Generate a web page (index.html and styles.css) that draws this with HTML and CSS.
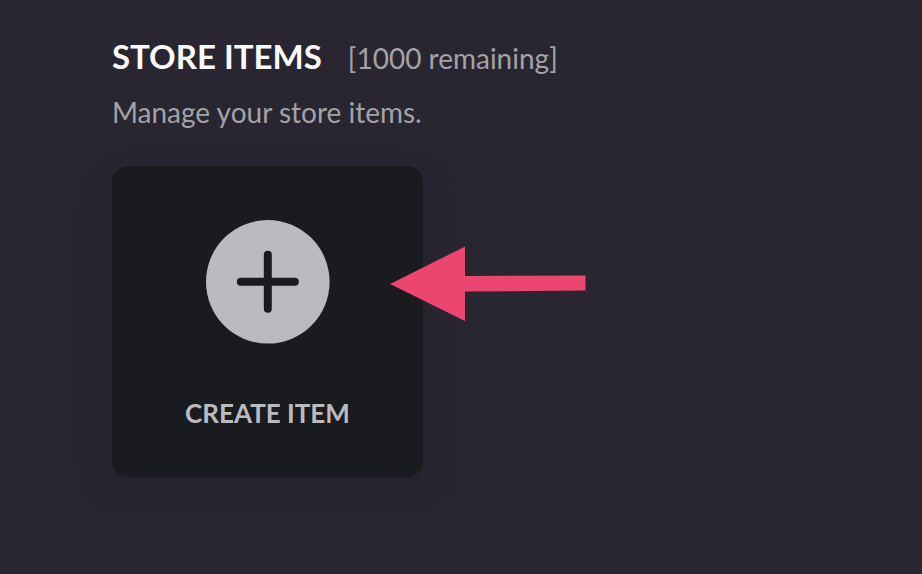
FILE: index.html
```html
<!DOCTYPE html>
<html lang="en">
<head>
  <meta charset="UTF-8">
  <meta name="viewport" content="width=device-width, initial-scale=1.0">
  <title>Store Items</title>
  <link rel="stylesheet" href="styles.css">
</head>
<body>

  <main class="store">
    <!-- Heading -->
    <header class="store-header">
      <h1>STORE ITEMS</h1>
      <span class="remaining">[1000 remaining]</span>
    </header>
    <p class="description">Manage your store items.</p>

    <!-- Item Cards -->
    <div class="item-list">
      <div class="item">
        <button type="button" class="create-item">
          <svg class="plus-icon" viewBox="0 0 124 124" aria-hidden="true">
            <circle cx="61.8" cy="61.8" r="61.8" fill="#babbbf"/>
            <path d="M61.8 34.8v54M34.8 61.8h54" stroke="#1a1b1f" stroke-width="8" stroke-linecap="round"/>
          </svg>
          <span>CREATE ITEM</span>
        </button>
        <svg class="arrow" viewBox="0 0 196 76" aria-hidden="true">
          <path d="M0 38L75 0.5V30L195.5 29.5V44.5L75 45.5V75Z" fill="#eb466f"/>
        </svg>
      </div>
    </div>
  </main>

</body>
</html>
```
FILE: styles.css
```css
body {
  background-color: #292632;
  color: #a3a2a6;
  font-family: Lato, sans-serif;
  margin: 0;
}

.store {
  padding: 34px 112px;
}

/* Heading */
.store-header {
  display: flex;
  flex-wrap: wrap;
  align-items: baseline;
  gap: 0 26px;
  line-height: 44px;
}

.store-header h1 {
  color: #fafafa;
  font-size: 33px;
  font-weight: bold;
  margin: 0;
}

.remaining,
.description {
  font-size: 28px;
}

.description {
  line-height: 36px;
  margin: 14px 0 36px;
}

/* Item Cards */
.item-list {
  display: grid;
  grid-template-columns: repeat(auto-fill, 311px);
  gap: 24px;
}

.item {
  position: relative;
}

.create-item {
  display: flex;
  flex-direction: column;
  align-items: center;
  gap: 52px;
  width: 100%;
  padding: 54px 24px 47px;
  border: none;
  border-radius: 16px;
  background-color: #1a1b1f;
  box-shadow: 0 12px 32px rgba(32, 16, 32, 0.25);
  color: #babbbf;
  font-family: inherit;
  font-size: 26px;
  font-weight: bold;
  line-height: 34px;
  cursor: pointer;
}

.plus-icon {
  width: 124px;
}

/* Arrow pointing at the create card */
.arrow {
  position: absolute;
  top: 80px;
  left: 278px;
  width: 196px;
  pointer-events: none;
}
```
